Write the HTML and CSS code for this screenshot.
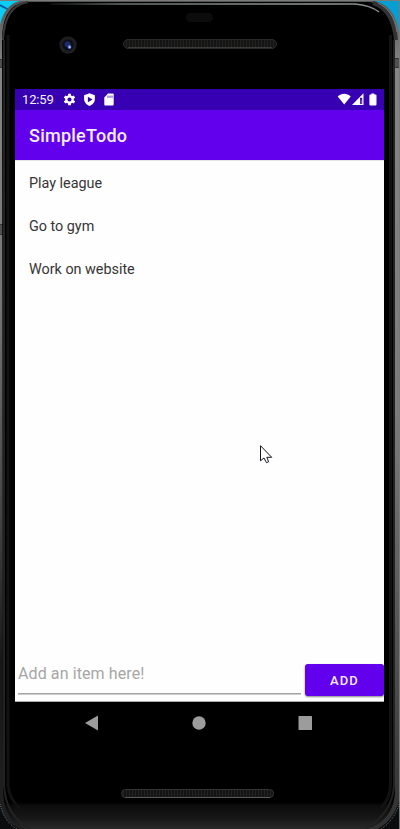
FILE: index.html
```html
<!DOCTYPE html>
<html lang="en">
<head>
<meta charset="utf-8">
<title>SimpleTodo</title>
<link rel="stylesheet" href="styles.css">
</head>
<body>
<div class="device">
  <svg class="shell" viewBox="0 0 400 829" aria-hidden="true">
    <defs>
      <linearGradient id="rim" x1="0" y1="0" x2="0" y2="1">
        <stop offset="0" stop-color="#555"/><stop offset=".08" stop-color="#858585"/>
        <stop offset=".35" stop-color="#777"/><stop offset=".62" stop-color="#444"/>
        <stop offset=".8" stop-color="#171717"/><stop offset="1" stop-color="#202122"/>
      </linearGradient>
      <linearGradient id="rimRight" x1="0" y1="0" x2="0" y2="1">
        <stop offset="0" stop-color="#555"/><stop offset=".08" stop-color="#858585"/>
        <stop offset=".5" stop-color="#7b7b7b"/><stop offset=".8" stop-color="#505050"/>
        <stop offset="1" stop-color="#303030"/>
      </linearGradient>
      <linearGradient id="chin" x1="0" y1="0" x2="0" y2="1">
        <stop offset="0" stop-color="#000"/><stop offset=".15" stop-color="#0d0d0d"/>
        <stop offset=".6" stop-color="#171717"/><stop offset="1" stop-color="#292929"/>
      </linearGradient>
      <linearGradient id="shine" x1="50" y1="0" x2="380" y2="0" gradientUnits="userSpaceOnUse">
        <stop offset="0" stop-color="#111"/><stop offset=".22" stop-color="#6c7472"/>
        <stop offset=".8" stop-color="#939a98"/><stop offset="1" stop-color="#888"/>
      </linearGradient>
      <pattern id="mesh" width="3" height="3" patternUnits="userSpaceOnUse">
        <rect width="3" height="3" fill="#141414"/><path d="M.5 0v3" stroke="#232322"/>
      </pattern>
      <clipPath id="body"><path d="M2 38C3 16 10 3 28 2H368C386 3 395 16 395 34V790C395 808 386 823 366 829H24C10 822 3 808 3 788Z"/></clipPath>
    </defs>
    <path d="M0 0H400V829H0Z" fill="#0b0c0e"/>
    <path d="M0 0H24V28H0Z" fill="#08cdf5"/>
    <path d="M0 5L9 10" stroke="#075898" stroke-width="2"/>
    <path d="M374 0H400V35H388Z" fill="#059fd3"/>
    <path d="M0 25C2 14 9 3 20 1H200V829H20C8 824 1 813 0 804Z" fill="url(#rim)"/>
    <path d="M200 1H374C389 4 397 16 399 34V801C395 814 388 823 378 829H200Z" fill="url(#rimRight)"/>
    <path d="M0 59H4V67H0ZM0 224H4V234H0ZM395 58H399V67H395Z" fill="#505050"/>
    <path d="M0 59.5H4M0 67.5H4M0 224.5H4M0 234.5H4M395 58.5H399M395 67.5H399" stroke="#363636"/>
    <path d="M2 38C3 16 10 3 28 2H368C386 3 395 16 395 34V790C395 808 386 823 366 829H24C10 822 3 808 3 788Z"/>
    <g clip-path="url(#body)">
      <path d="M0 802H400V829H0Z" fill="url(#chin)"/>
      <path d="M4 40V785C5 806 13 819 30 829M394 40V785C393 806 382 819 366 829" fill="none" stroke="#222" stroke-width="2"/>
      <path d="M8 35V785C9 797 14 802 20 809M390.500 35V785C390 797 386 802 380 809" fill="none" stroke="#121212" stroke-width="3"/>
    </g>
    <path d="M3 40C4 18 11 5 28 2" fill="none" stroke="#3a3a3a" stroke-width="2"/>
    <path d="M373 3C387 7 394 19 396 40" fill="none" stroke="#333" stroke-width="4"/>
    <path d="M378 3C388 8 395 17 397 32" fill="none" stroke="#777"/>
    <path d="M50 4H355C368 5 374 8 379 12" fill="none" stroke="url(#shine)" stroke-width="1.500"/>
    <path d="M0 .5H400" stroke="#777b79"/>
    <path d="M0 804C3 816 8 824 17 829M399 804C396 815 389 824 381 829" fill="none" stroke="#65686a" stroke-dasharray="1 1"/>
    <path d="M399.500 0V829" stroke="#77797a"/>
    <rect x="186" y="13" width="27" height="9" rx="4.500" fill="#0c0c0c"/>
    <circle cx="68" cy="45" r="8.700" fill="#1e1e1f"/><circle cx="68" cy="45" r="5.500" fill="#0a0c18"/>
    <circle cx="67.500" cy="44.200" r="3" fill="#1b2a68"/><circle cx="69.500" cy="47" r="1.900" fill="#5870c9"/><circle cx="69.600" cy="47.200" r=".9" fill="#bed1ff"/>
    <rect x="123.500" y="39.500" width="153" height="9" rx="4.500" fill="url(#mesh)" stroke="#292929"/>
    <path d="M128 47.500H272" stroke="#3c3c3a"/>
    <rect x="121.500" y="789.500" width="152" height="8" rx="4" fill="url(#mesh)" stroke="#333"/>
    <path d="M125 797.500H270" stroke="#5a5a5a"/>
  </svg>

  <main class="screen">
    <div class="status">
      <span class="time">12:59</span>
      <svg class="notices" viewBox="0 0 54 14" aria-hidden="true">
        <g fill="none" stroke="#fff"><circle cx="6.500" cy="6.500" r="3.200" stroke-width="2.300"/><path d="M6.500 .7V3M6.500 10V12.300M1.500 3.600L3.600 4.800M9.400 8.200L11.500 9.400M1.500 9.400L3.600 8.200M9.400 4.800L11.500 3.600" stroke-width="2.800"/></g>
        <path d="M26.500 .3L31.900 2.300V6C31.900 9.300 29.500 11.900 26.500 12.900C23.500 11.900 21.100 9.300 21.100 6V2.300Z" fill="#fff"/><path d="M24.900 3.700L29.500 6.500L24.900 9.300Z" fill="#3700b3"/>
        <path d="M45 .6H49.700Q50.700 .6 50.700 1.600V11.600Q50.700 12.600 49.700 12.600H42.300Q41.300 12.600 41.300 11.600V4.400Z" fill="#fff"/><path d="M45 2.600V4.800M47 2.600V4.800M49 2.600V4.800" stroke="#3700b3" stroke-width=".8"/>
      </svg>
      <svg class="signals" viewBox="0 0 40 14" aria-hidden="true">
        <path d="M.7 3.400C4.500 0 10 0 13.700 3.400L7.200 11.500Z" fill="#fff"/>
        <path d="M26.500 .3V12H15Z" fill="#fff"/><path d="M23 4.800H25.200V11H23Z" fill="#3700b3"/><path d="M24.100 6.500V11" stroke="#b8a5e7" stroke-width=".6"/>
        <path d="M34.300 .4H37.300V1.600H38.800Q39.500 1.600 39.500 2.400V11.600Q39.500 12.400 38.700 12.400H33.100Q32.400 12.400 32.400 11.600V2.400Q32.400 1.600 33.100 1.600H34.300Z" fill="#fff"/>
      </svg>
    </div>
    <header class="appbar"><h1>SimpleTodo</h1></header>
    <ul class="todos">
      <li>Play league</li>
      <li>Go to gym</li>
      <li>Work on website</li>
    </ul>
    <form class="composer">
      <input class="entry" type="text" placeholder="Add an item here!" aria-label="New item">
      <button class="add" type="button">ADD</button>
    </form>
  </main>
  <nav class="navbar">
    <svg viewBox="0 0 369 42" aria-hidden="true">
      <g fill="#9c9c9c"><path d="M83 13.500V28.500L70 21Z"/><circle cx="184" cy="21" r="6.700"/><rect x="283.500" y="14" width="13.500" height="14" rx=".6"/></g>
    </svg>
  </nav>
  <svg class="pointer" viewBox="0 0 14 20" aria-hidden="true"><path d="M.5 .7V15.800L4 13L6.500 17.700L8.600 16.700L6.800 12.300H11.700Z" fill="#fff" stroke="#15151c"/></svg>
</div>
</body>
</html>
```
FILE: styles.css
```css
* { box-sizing: border-box; }
body { margin: 0; background: #000; font-family: Roboto, sans-serif; }
.device { position: relative; width: 400px; height: 829px; padding: 89px 16px 0 15px; overflow: hidden; }
.shell { position: absolute; inset: 0; width: 400px; height: 829px; }
.screen { position: relative; display: flex; flex-direction: column; height: 613px; background: #fefefe; border-bottom: 1px solid #aaa; }
.status { display: flex; align-items: center; flex: none; height: 21px; padding: 0 7px; background: #3700b3; color: #f4f0ff; }
.time { width: 41px; font-size: 13px; line-height: 21px; letter-spacing: -.15px; }
.notices { width: 54px; height: 14px; }
.signals { width: 40px; height: 14px; margin-left: auto; }
.appbar { display: flex; align-items: center; flex: none; height: 50px; padding: 2px 14px 0; background: #6200ee; color: #f5eeff; }
.appbar h1 { margin: 0; font-size: 18px; font-weight: 500; line-height: 24px; letter-spacing: .25px; }
.todos { flex: 1; margin: 0; padding: 1px 14px; list-style: none; border-top: 1px solid #e4e4e4; }
.todos li { height: 43px; color: #363636; font-size: 14.4px; line-height: 43px; letter-spacing: -.02px; }
.composer { display: flex; align-items: flex-start; flex: none; height: 37px; padding-left: 3px; gap: 4px; }
.entry { flex: 1; min-width: 0; height: 30px; padding: 0 0 11px; border: 0; border-bottom: 1px solid #a4a6a4; border-radius: 0; outline: 0; background: transparent; font: 16px/18px Roboto, sans-serif; letter-spacing: .1px; box-shadow: 0 1px #ccc; }
.entry::placeholder { color: #a6a6a6; opacity: 1; }
.add { width: 79px; height: 32px; padding: 0; border: 0; border-radius: 3px; background: #6200ee; color: #f4edff; box-shadow: 0 1px 2px #0007; font: 500 13px/33px Roboto, sans-serif; letter-spacing: 1.1px; }
.navbar { position: relative; height: 42px; }
.navbar svg { display: block; width: 369px; height: 42px; }
.pointer { position: absolute; left: 260px; top: 445px; width: 14px; height: 20px; }
```
